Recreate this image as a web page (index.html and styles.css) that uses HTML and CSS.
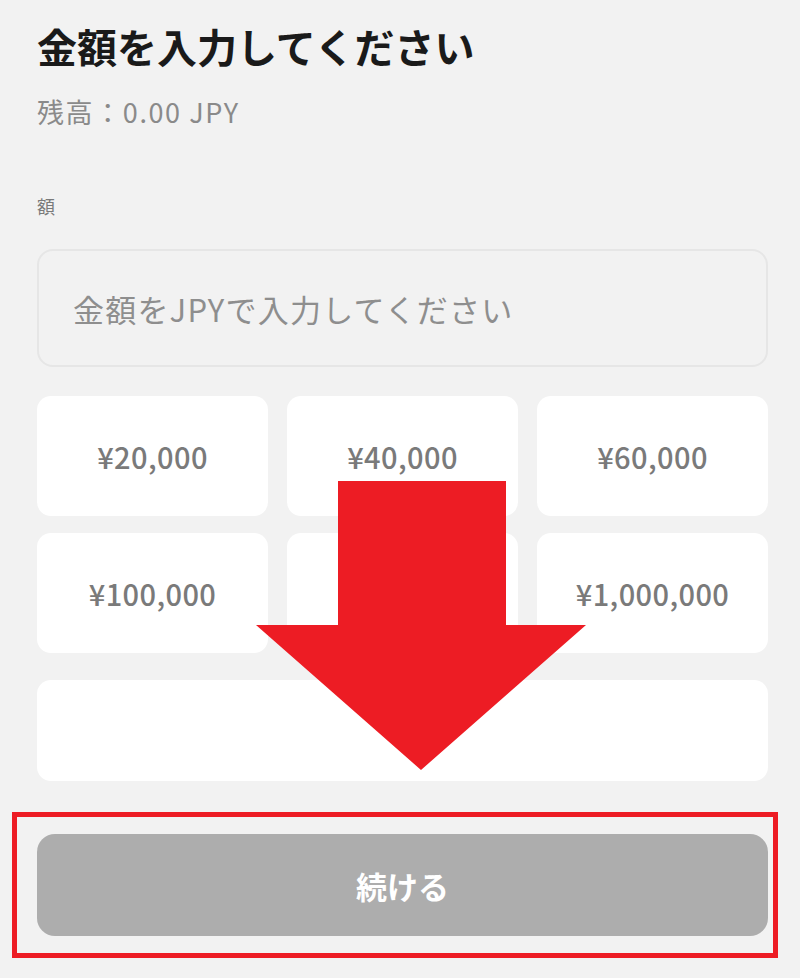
FILE: index.html
```html
<!DOCTYPE html>
<html lang="ja">
<head>
<meta charset="utf-8">
<link rel="stylesheet" href="styles.css">
</head>
<body>
<div class="page">
  <h1 class="title">金額を入力してください</h1>
  <div class="balance">残高：0.00 JPY</div>
  <div class="label">額</div>
  <div class="input">金額をJPYで入力してください</div>
  <div class="grid">
    <div class="chip">¥20,000</div>
    <div class="chip">¥40,000</div>
    <div class="chip">¥60,000</div>
    <div class="chip">¥100,000</div>
    <div class="chip">¥500,000</div>
    <div class="chip">¥1,000,000</div>
    <div class="notice"></div>
  </div>
  <div class="highlight">
    <div class="button">続ける</div>
  </div>
  <svg class="arrow" width="340" height="300" viewBox="0 0 340 300">
    <polygon points="82,0 250,0 250,144 330,144 165,289 0,144 82,144" fill="#ed1c24"/>
  </svg>
</div>
</body>
</html>
```
FILE: styles.css
```css
html, body {
  margin: 0;
  padding: 0;
  background: #f2f2f2;
}
body {
  font-family: "Noto Sans CJK JP", "Noto Sans", sans-serif;
}
.page {
  position: relative;
  width: 800px;
  height: 978px;
  box-sizing: border-box;
  padding: 18px 32px 0 37px;
}
.title {
  margin: 0;
  font-size: 40px;
  font-weight: 700;
  line-height: 56px;
  color: #1a1a1a;
}
.balance {
  margin-top: 20px;
  font-size: 27px;
  line-height: 36px;
  color: #8a8a8a;
  letter-spacing: 1.6px;
}
.label {
  margin-top: 64px;
  font-size: 18px;
  line-height: 24px;
  color: #7a7a7a;
}
.input {
  margin-top: 31px;
  height: 118px;
  box-sizing: border-box;
  border: 2px solid #e6e6e6;
  border-radius: 16px;
  padding-left: 34px;
  display: flex;
  align-items: center;
  font-size: 31px;
  color: #8e8e8e;
  letter-spacing: 1.2px;
}
.grid {
  margin-top: 29px;
  display: grid;
  grid-template-columns: repeat(3, 1fr);
  column-gap: 19px;
  row-gap: 17px;
}
.chip {
  height: 120px;
  background: #ffffff;
  border-radius: 14px;
  display: flex;
  align-items: center;
  justify-content: center;
  font-size: 29px;
  font-weight: 500;
  color: #7a7a7a;
  letter-spacing: 0.4px;
}
.notice {
  grid-column: 1 / -1;
  height: 101px;
  margin-top: 10px;
  background: #ffffff;
  border-radius: 14px;
}
.highlight {
  margin: 31px 0 0 -25px;
  width: 766px;
  height: 146px;
  box-sizing: border-box;
  border: 5px solid #ed1c24;
  padding: 17px 5px 0 20px;
}
.button {
  height: 102px;
  background: #adadad;
  border-radius: 18px;
  display: flex;
  align-items: center;
  justify-content: center;
  font-size: 31px;
  font-weight: 700;
  color: #ffffff;
}
.arrow {
  position: absolute;
  left: 256px;
  top: 481px;
}
```
